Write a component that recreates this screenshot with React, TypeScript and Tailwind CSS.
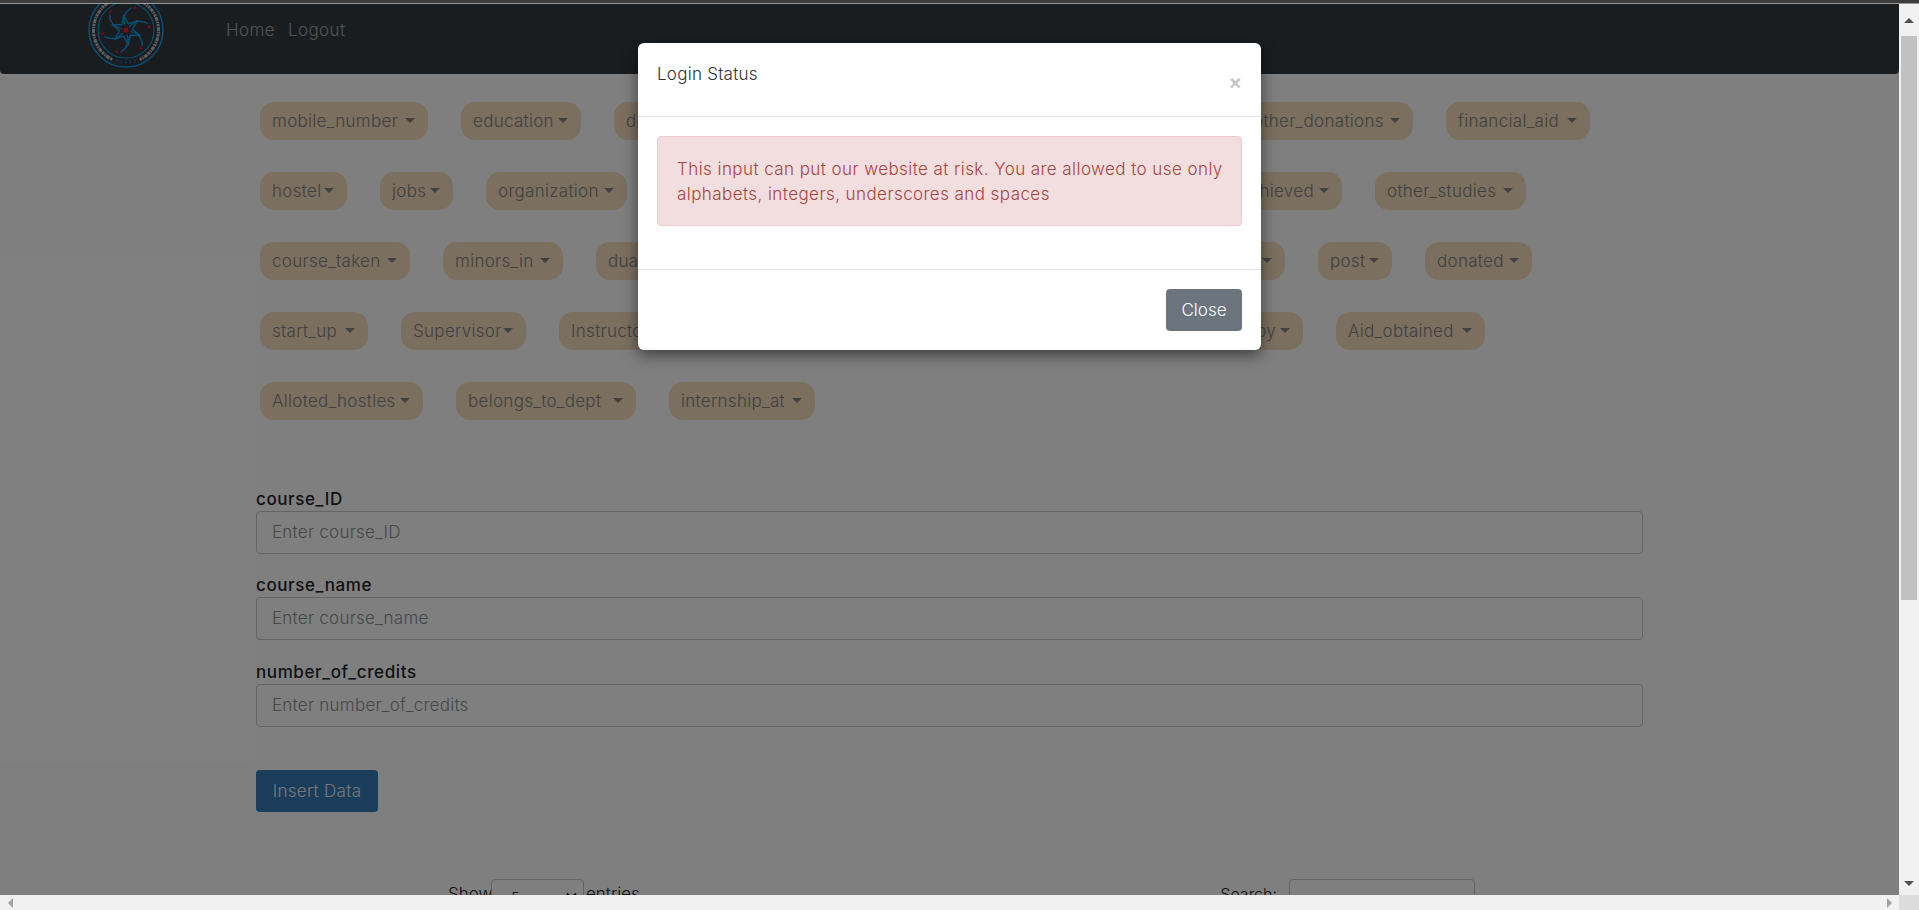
const font = { fontFamily: '"Inter", "Lato", sans-serif' };

function Logo() {
  const arms = [0, 60, 120, 180, 240, 300];
  const dots: [number, number][] = [[-15, -18.7], [9, -22], [23, -3.3], [14.7, 18.3], [-9, 21.7], [-23.7, 3.3]];
  const star: string[] = [];
  for (let i = 0; i < 12; i++) {
    const r = i % 2 === 0 ? 15 : 6.5;
    const a = ((i * 30 - 9) * Math.PI) / 180;
    star.push(`${(r * Math.sin(a)).toFixed(2)},${(-r * Math.cos(a)).toFixed(2)}`);
  }
  const bottom: [number, number][] = [[-8.8, 30.7], [-4.45, 31.7], [0, 32], [4.45, 31.7], [8.8, 30.7]];
  return (
    <svg width="80" height="80" viewBox="-40 -40 80 80" className="block">
      <circle cx="0" cy="0" r="37" fill="none" stroke="#0e9fee" strokeWidth="1.5" />
      <circle cx="0" cy="0" r="28" fill="none" stroke="#0e9fee" strokeWidth="1.1" />
      <path
        d="M-13.7 29.5 A32.5 32.5 0 1 1 13.7 29.5"
        fill="none"
        stroke="#bdbdbd"
        strokeWidth="3"
        strokeDasharray="2.4 0.8 4 0.8 1.4 0.8"
      />
      {bottom.map(([x, y], i) => (
        <circle key={i} cx={x} cy={y} r="0.8" fill="#0e9fee" />
      ))}
      <polygon points={star.join(" ")} fill="none" stroke="#0e9fee" strokeWidth="1.3" strokeLinejoin="round" />
      {arms.map((a) => (
        <path
          key={a}
          transform={`rotate(${a})`}
          d="M-5 -1.5 C-10 -2.5 -16 -6 -16.4 -15.5"
          fill="none"
          stroke="#0e9fee"
          strokeWidth="1.2"
          strokeLinecap="round"
        />
      ))}
      {dots.map(([x, y], i) => (
        <circle key={i} cx={x} cy={y} r="1.5" fill="#e0142a" />
      ))}
      <circle cx="0" cy="0" r="2.6" fill="#f0142a" />
    </svg>
  );
}

function Pill({ label, w }: { label: string; w: number }) {
  return (
    <div
      style={{ width: w }}
      className="h-[38px] shrink-0 rounded-[14px] bg-[#f6dfc0] pl-[12px] pr-[13px] flex items-center justify-between text-[17px] tracking-[0.3px] font-light text-[#828282] whitespace-nowrap"
    >
      <span className="mt-[2px]">{label}</span>
      <span className="shrink-0 mb-[2px] w-0 h-0 border-x-[5px] border-x-transparent border-t-[5px] border-t-[#828282]" />
    </div>
  );
}

const rows: [string, number][][] = [
  [["mobile_number", 168], ["education", 120], ["degree", 171], ["department", 171], ["awards", 186], ["other_donations", 172], ["financial_aid", 144]],
  [["hostel", 87], ["jobs", 73], ["organization", 141], ["placement", 251], ["companies", 251], ["achieved", 114], ["other_studies", 151]],
  [["course_taken", 150], ["minors_in", 120], ["dual_degree", 160], ["courses", 145], ["research", 145], ["skills", 140], ["post", 74], ["donated", 107]],
  [["start_up", 108], ["Supervisor", 125], ["Instructor", 181], ["Teaches", 181], ["Learns", 181], ["Occupy", 102], ["Aid_obtained", 149]],
  [["Alloted_hostles", 163], ["belongs_to_dept", 180], ["internship_at", 146]],
];

function Field({ label, className }: { label: string; className: string }) {
  return (
    <div className={className}>
      <div className="h-[24px] leading-[24px] text-[17px] tracking-[0.6px] font-medium text-[#212529]">{label}</div>
      <div className="h-[43px] border border-[#c4c8cc] rounded-[4px] flex items-center pl-[15px] pt-[1px] text-[17px] tracking-[0.25px] font-light text-[#8a9099] bg-white">
        Enter {label}
      </div>
    </div>
  );
}

export default function App() {
  return (
    <div style={font} className="relative w-[1919px] h-[910px] overflow-hidden bg-white flex flex-col text-[#212529]">
      <div className="h-[4px] shrink-0 bg-[#3c3c3c] border-b border-[#9a9a9a]" />
      <div className="flex-1 flex min-h-0">
        <div className="relative w-[1899px] overflow-hidden">
          <nav className="h-[70px] bg-[#343a40] rounded-b-[4px] overflow-hidden flex items-start">
            <div className="ml-[86px] -mt-[14px]">
              <Logo />
            </div>
            <div className="ml-[60px] mt-[16px] flex gap-[13px] text-[17px] tracking-[0.4px] leading-[20px] font-light text-[#a4a7aa]">
              <span>Home</span>
              <span>Logout</span>
            </div>
          </nav>

          <div className="mx-auto w-[1387px]">
            <div className="pt-[28px] pl-[4px] flex flex-col gap-[32px]">
              {rows.map((r, i) => (
                <div key={i} className="flex gap-[33px]">
                  {r.map(([l, w]) => (
                    <Pill key={l} label={l} w={w} />
                  ))}
                </div>
              ))}
            </div>

            <Field label="course_ID" className="mt-[67px]" />
            <Field label="course_name" className="mt-[19px]" />
            <Field label="number_of_credits" className="mt-[20px]" />

            <div className="mt-[43px] w-[122px] h-[42px] rounded-[4px] bg-[#337ab7] pt-[1px] text-[#eeeeee] text-[17px] tracking-[0.3px] font-light flex items-center justify-center">
              Insert Data
            </div>

            <div className="mt-[67px] flex text-[17px] font-light relative">
              <div className="ml-[192px] flex items-start">
                <span className="w-[43px] overflow-hidden leading-[24px] mt-[3px]">Show</span>
                <div className="w-[93px] h-[38px] border border-[#c4c8cc] rounded-[4px] pl-[19px] pr-[6px] leading-[26px] pt-[5px] flex justify-between items-start">
                  <span className="text-[14px]">5</span>
                  <svg width="11" height="8" viewBox="0 0 11 8" className="mt-[7px]">
                    <path d="M1 1.5 L5.5 6 L10 1.5" fill="none" stroke="#212529" strokeWidth="2" />
                  </svg>
                </div>
                <span className="ml-[2px] leading-[24px] mt-[3px]">entries</span>
              </div>
              <div className="ml-auto mr-[168px] flex items-start">
                <span className="text-[16px] leading-[24px] mt-[3px]">Search:</span>
                <div className="ml-[12px] w-[186px] h-[38px] border border-[#c4c8cc] rounded-[4px]" />
              </div>
            </div>
          </div>

          <div className="absolute inset-0 bg-black/50" />

          <div className="absolute left-[638px] top-[39px] w-[623px] h-[307px] bg-white rounded-[6px] shadow-[0_5px_15px_rgba(0,0,0,0.5)] flex flex-col">
            <div className="relative h-[74px] shrink-0 border-b border-[#e5e5e5] pl-[19px] pt-[20px]">
              <div className="text-[17px] tracking-[0.25px] leading-[22px] font-light text-[#333]">Login Status</div>
              <span className="absolute right-[19px] top-[25px] text-[20px] leading-[28px] font-bold text-[#c8c8c8]">×</span>
            </div>
            <div className="h-[153px] shrink-0 border-b border-[#e5e5e5] pt-[19px] px-[19px]">
              <div className="h-[90px] border border-[#ebccd1] bg-[#f2dede] rounded-[4px] pl-[19px] pt-[20px] text-[17px] leading-[25px] font-light text-[#a94442] tracking-[0.43px] whitespace-nowrap">
                This input can put our website at risk. You are allowed to use only
                <br />
                alphabets, integers, underscores and spaces
              </div>
            </div>
            <div className="flex-1 flex justify-end items-start pt-[19px] pr-[19px]">
              <div className="w-[76px] h-[42px] rounded-[4px] bg-[#6c757d] pt-[2px] text-white text-[17px] font-light flex items-center justify-center">
                Close
              </div>
            </div>
          </div>
        </div>

        <div className="relative w-[20px] bg-[#f1f1f1] shrink-0 flex flex-col items-center">
          <div className="h-[32px] w-full flex items-center justify-center">
            <div className="w-0 h-0 border-x-[5px] border-x-transparent border-b-[5px] border-b-[#505050]" />
          </div>
          <div className="w-[16px] h-[564px] bg-[#c1c1c1]" />
          <div className="flex-1" />
          <div className="h-[24px] w-full flex items-center justify-center">
            <div className="w-0 h-0 border-x-[5px] border-x-transparent border-t-[5px] border-t-[#505050]" />
          </div>
        </div>
      </div>
      <div className="h-[15px] shrink-0 bg-[#f1f1f1] flex items-center">
        <div className="w-[20px] flex justify-center">
          <div className="w-0 h-0 border-y-[5px] border-y-transparent border-r-[5px] border-r-[#a3a3a3]" />
        </div>
        <div className="flex-1" />
        <div className="w-[20px] flex justify-center">
          <div className="w-0 h-0 border-y-[5px] border-y-transparent border-l-[5px] border-l-[#a3a3a3]" />
        </div>
        <div className="w-[20px] h-full bg-[#dcdcdc]" />
      </div>
    </div>
  );
}
